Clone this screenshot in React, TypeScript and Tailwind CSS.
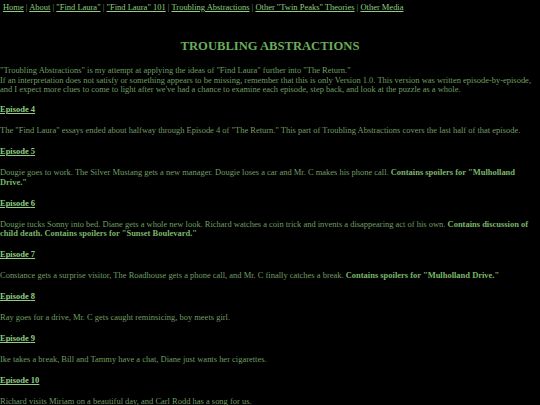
const NAV = [
  "Home",
  "About",
  "\"Find Laura\"",
  "\"Find Laura\" 101",
  "Troubling Abstractions",
  "Other \"Twin Peaks\" Theories",
  "Other Media",
];

type Ep = { n: number; text: string; bold?: string };

const EPISODES: Ep[] = [
  {
    n: 4,
    text: "The \"Find Laura\" essays ended about halfway through Episode 4 of \"The Return.\" This part of Troubling Abstractions covers the last half of that episode.",
  },
  {
    n: 5,
    text: "Dougie goes to work. The Silver Mustang gets a new manager. Dougie loses a car and Mr. C makes his phone call. ",
    bold: "Contains spoilers for \"Mulholland Drive.\"",
  },
  {
    n: 6,
    text: "Dougie tucks Sonny into bed. Diane gets a whole new look. Richard watches a coin trick and invents a disappearing act of his own. ",
    bold: "Contains discussion of child death. Contains spoilers for \"Sunset Boulevard.\"",
  },
  {
    n: 7,
    text: "Constance gets a surprise visitor, The Roadhouse gets a phone call, and Mr. C finally catches a break. ",
    bold: "Contains spoilers for \"Mulholland Drive.\"",
  },
  { n: 8, text: "Ray goes for a drive, Mr. C gets caught reminsicing, boy meets girl." },
  { n: 9, text: "Ike takes a break, Bill and Tammy have a chat, Diane just wants her cigarettes." },
  { n: 10, text: "Richard visits Miriam on a beautiful day, and Carl Rodd has a song for us." },
];

export default function App() {
  return (
    <div className="min-h-[405px] w-[540px] overflow-hidden bg-black font-['Liberation_Serif',serif] text-[8.47px] leading-[9.7px] text-[#6f9f60]">
      {/* Nav */}
      <div className="pl-[3px] pt-[3px] text-[#8fce80]">
        {NAV.map((n, i) => (
          <span key={n}>
            {i > 0 && <span className="text-[#6f9f60]"> | </span>}
            <a className="underline">{n}</a>
          </span>
        ))}
      </div>

      <h2 className="mt-[26.5px] text-center text-[12.6px] leading-[14.6px] font-bold text-[#6aad5c]">
        TROUBLING ABSTRACTIONS
      </h2>

      <p className="mt-[12px]">
        "Troubling Abstractions" is my attempt at applying the ideas of "Find Laura" further into "The Return."
        <br />
        If an interpretation does not satisfy or something appears to be missing, remember that this is only Version 1.0. This version was written episode-by-episode, and I expect more clues to come to light after we've had a chance to examine each episode, step back, and look at the puzzle as a whole.
      </p>

      {EPISODES.map((e, i) => (
        <div key={e.n}>
          <h4 className={i === 0 ? "mt-[10px] font-bold text-[#8fce80]" : "mt-[11.3px] font-bold text-[#8fce80]"}>
            <a className="underline">Episode {e.n}</a>
          </h4>
          <p className="mt-[11.3px]">
            {e.text}
            {e.bold && <b className="font-bold text-[#7ab56a]">{e.bold}</b>}
          </p>
        </div>
      ))}
    </div>
  );
}
